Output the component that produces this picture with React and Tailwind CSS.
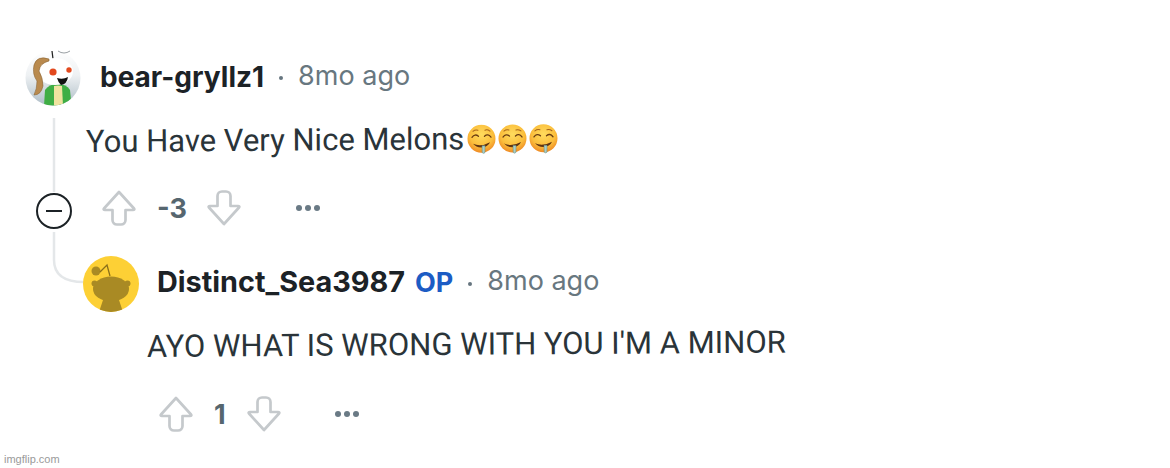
const ArrowIcon = ({ down, className = "" }) => (
  <svg width="34" height="36" viewBox="0 0 34 36" className={`shrink-0 ${down ? "rotate-180" : ""} ${className}`} fill="none">
    <path
      d="M17 2 L32 18.500 Q33 20 31 20 H23.500 V30 a4.500 4.500 0 0 1 -4.500 4.500 h-4 a4.500 4.500 0 0 1 -4.500 -4.500 V20 H3 Q1 20 2 18.500 Z"
      stroke="#c5c9cc"
      strokeWidth="2.700"
      strokeLinejoin="round"
    />
  </svg>
);

const Dots = () => (
  <div className="flex gap-[3px]">
    <span className="w-[6px] h-[6px] rounded-full bg-[#6a7a85]" />
    <span className="w-[6px] h-[6px] rounded-full bg-[#6a7a85]" />
    <span className="w-[6px] h-[6px] rounded-full bg-[#6a7a85]" />
  </div>
);

const Drool = ({ id }) => (
  <svg width="31" height="31" viewBox="0 0 31 31">
    <defs>
      <radialGradient id={id} cx="50%" cy="35%" r="65%">
        <stop offset="0%" stopColor="#ffdc5e" />
        <stop offset="65%" stopColor="#fbbe3c" />
        <stop offset="100%" stopColor="#ef8a24" />
      </radialGradient>
    </defs>
    <circle cx="15.500" cy="14.500" r="14" fill={`url(#${id})`} />
    <path d="M6 13 Q9 9 12.500 12" stroke="#6b3d12" strokeWidth="1.300" fill="none" strokeLinecap="round" />
    <path d="M18.500 12 Q22 9 25 13" stroke="#6b3d12" strokeWidth="1.300" fill="none" strokeLinecap="round" />
    <path d="M7 7 Q9.500 5 12 6 M19 6 Q21.500 5 24 7" stroke="#a8641c" strokeWidth="1" fill="none" strokeLinecap="round" />
    <path d="M7 19.500 Q15 23 24 18 Q22 23 15 23.300 Q10 23 7 19.500 Z" fill="#5f3310" />
    <path d="M16 21.500 h3 l-.2 7 q-1.300 1.300 -2.600 0 Z" fill="#a9cfc8" stroke="#5f8a84" strokeWidth=".5" />
  </svg>
);

const BearAvatar = () => (
  <svg width="56" height="56" viewBox="0 16 56 56" className="shrink-0 overflow-visible">
    <defs>
      <linearGradient id="bearBg" x1="0" y1="0" x2="0" y2="1">
        <stop offset="0%" stopColor="#ffffff" />
        <stop offset="45%" stopColor="#eef1f3" />
        <stop offset="100%" stopColor="#aebdc7" />
      </linearGradient>
      <clipPath id="bearClip">
        <circle cx="28" cy="44" r="27.500" />
      </clipPath>
    </defs>
    <circle cx="28" cy="44" r="27.500" fill="url(#bearBg)" />
    <g clipPath="url(#bearClip)">
      <path d="M19 72 L20 56 Q24 50 32 50 Q42 50 45 56 L46 66 L42 72 Z" fill="#3fae45" />
      <path d="M29 72 L29 52 Q33 51 37 52 L38 72 Z" fill="#f0e3a0" />
    </g>
    <path d="M27 17 L28 25" stroke="#222" strokeWidth="1.200" />
    <path d="M33 17 Q39 21 45 17" stroke="#9aa0a4" strokeWidth="1" fill="none" />
    <ellipse cx="30" cy="37.500" rx="18" ry="13.500" fill="#fff" />
    <path d="M24 25 Q12 21 9 31 Q7 40 12 47 Q12 55 9 61 Q16 61 18 52 Q18 44 14 37 Q15 29 24 27 Z" fill="#b98a4e" stroke="#8b6534" strokeWidth=".6" />
    <circle cx="28" cy="38" r="3.600" fill="#e2491e" />
    <circle cx="44" cy="36" r="2.700" fill="#e2491e" />
    <path d="M32 44 Q38 46 43 43 Q42 50 36 51 Q33 48 32 44 Z" fill="#111" />
  </svg>
);

const SeaAvatar = () => (
  <svg width="56" height="56" viewBox="0 0 56 56" className="shrink-0">
    <defs>
      <clipPath id="seaClip">
        <circle cx="28" cy="28" r="28" />
      </clipPath>
    </defs>
    <circle cx="28" cy="28" r="28" fill="#fdd035" />
    <g clipPath="url(#seaClip)" fill="#a98a24">
      <circle cx="13" cy="15" r="4.500" />
      <path d="M17 16 L24 9 L27 20" stroke="#8a6f1a" strokeWidth="1.300" fill="none" />
      <ellipse cx="28" cy="33" rx="18" ry="12.500" />
      <circle cx="11.500" cy="27.500" r="3" />
      <circle cx="44.500" cy="27.500" r="3" />
      <path d="M20 44 h16 l4 12 h-24 Z" />
    </g>
  </svg>
);

const VoteRow = ({ collapse, score, className, scoreClass, dotsClass }) => (
  <div className={`flex items-start ${className}`}>
    {collapse}
    <ArrowIcon className="mt-[-1px]" />
    <span className={`mt-[4px] font-bold text-[27px] leading-none text-[#56666f] ${scoreClass}`}>{score}</span>
    <ArrowIcon down className="mt-[-1px]" />
    <div className={`mt-[14px] ${dotsClass}`}>
      <Dots />
    </div>
  </div>
);

const CollapseButton = () => (
  <div className="mt-[2px] w-[36px] h-[36px] rounded-full border-2 border-[#1c2226] flex items-center justify-center shrink-0 mr-[30px] bg-white">
    <span className="w-[16px] h-[2px] bg-[#1c2226]" />
  </div>
);

const Meta = ({ time, timeClass = "mt-[-4px]" }) => (
  <>
    <span className="ml-[15px] w-[4px] h-[4px] rounded-full bg-[#66757f]" />
    <span className={`ml-[15px] text-[27px] leading-none text-[#68777f] ${timeClass}`}>{time}</span>
  </>
);

export default function App() {
  return (
    <div className="relative w-[1170px] h-[468px] overflow-hidden bg-white font-['Inter',sans-serif] text-[#1c2226]">
      {/* thread lines */}
      <svg width="100" height="200" viewBox="0 0 100 200" className="absolute left-0 top-[110px]" fill="none">
        <path d="M54 8 V82" stroke="#e4e7e9" strokeWidth="2.500" />
        <path d="M54 122 V150 Q54 172 84 172" stroke="#e4e7e9" strokeWidth="2.500" />
      </svg>

      <div className="relative pl-[25px] pt-[50px]">
        <div className="flex items-center">
          <BearAvatar />
          <span className="ml-[19px] mt-[-3px] font-bold text-[28px] leading-none">bear-gryllz1</span>
          <Meta time="8mo ago" timeClass="mt-[-6px]" />
        </div>

        <p className="ml-[61px] mt-[18px] h-[36px] text-[31px] leading-[36px] font-['Roboto',sans-serif] text-[#2a3439] flex items-center origin-left rotate-[-0.4deg]">
          You Have Very Nice Melons
          <span className="flex ml-[2px]">
            <Drool id="d1" />
            <Drool id="d2" />
            <Drool id="d3" />
          </span>
        </p>

        <VoteRow
          collapse={<CollapseButton />}
          score="-3"
          className="ml-[11px] mt-[31px]"
          scoreClass="ml-[21px] mr-[20px]"
          dotsClass="ml-[55px]"
        />

        <div className="flex items-center ml-[58px] mt-[27px]">
          <SeaAvatar />
          <span className="ml-[18px] mt-[-4px] font-bold text-[28.800px] leading-none">Distinct_Sea3987</span>
          <span className="ml-[10px] mt-[-4px] font-bold text-[27px] leading-none text-[#1c5cc4]">OP</span>
          <Meta time="8mo ago" timeClass="mt-[-8px] ml-[13px]" />
        </div>

        <p className="ml-[122px] mt-[17px] text-[31px] leading-[36px] font-['Roboto',sans-serif] text-[#2a3439] origin-left rotate-[-0.4deg] whitespace-nowrap">
          AYO WHAT IS WRONG WITH YOU I'M A MINOR
        </p>

        <VoteRow
          score="1"
          className="ml-[134px] mt-[32px]"
          scoreClass="ml-[21px] mr-[21px]"
          dotsClass="ml-[54px]"
        />
      </div>

      <span className="absolute left-[4px] top-[452px] text-[11px] leading-[14px] text-[#9a9a9a] font-['Liberation_Sans',sans-serif]">
        imgflip.com
      </span>
    </div>
  );
}
